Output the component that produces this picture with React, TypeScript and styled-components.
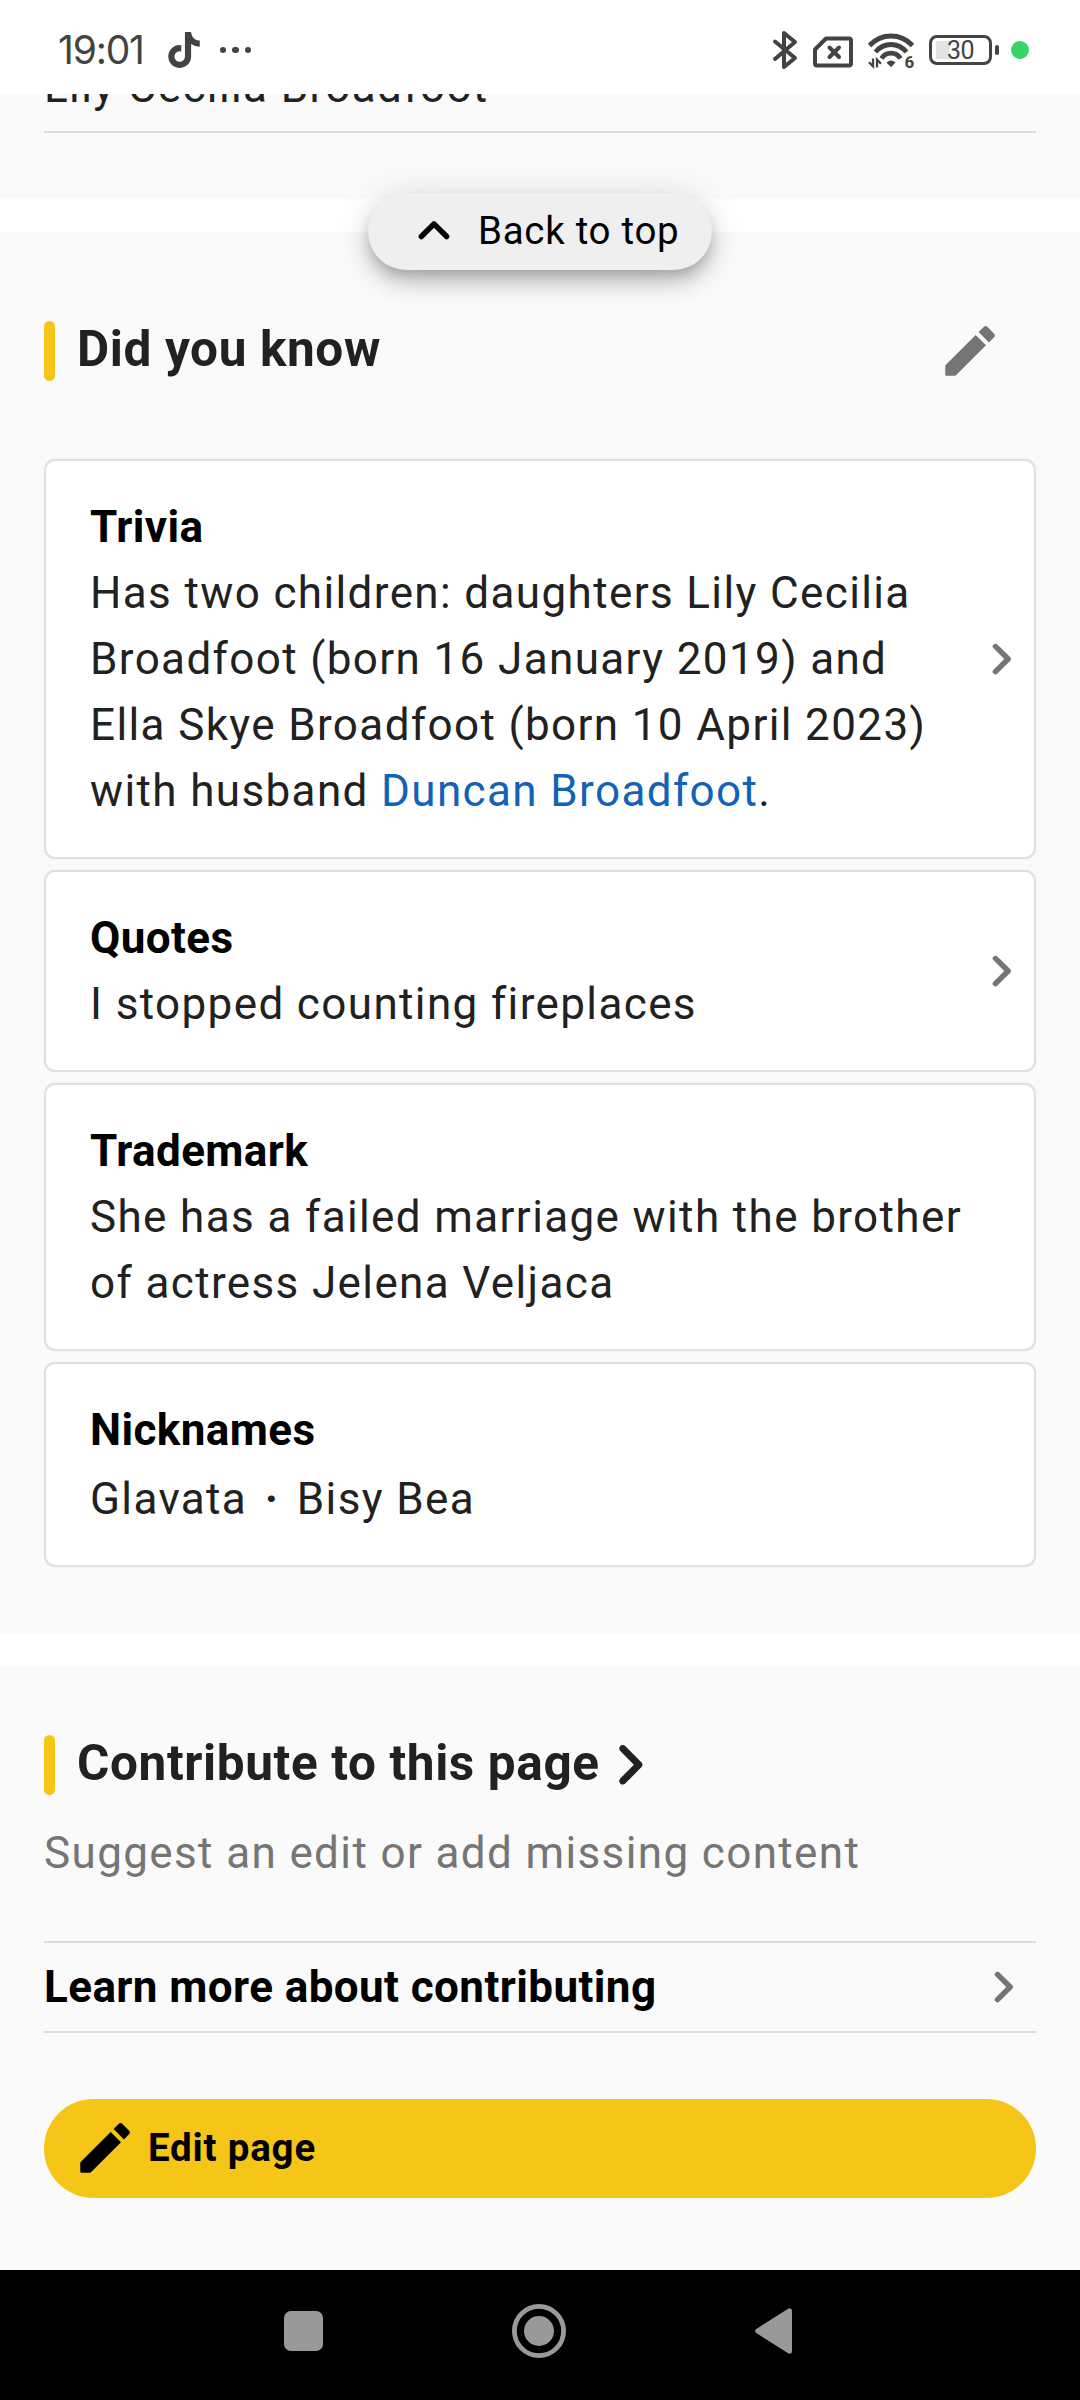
import React from "react";
import styled, { createGlobalStyle } from "styled-components";
import { FaTiktok } from "react-icons/fa";

const GlobalStyle = createGlobalStyle`
  *, *::before, *::after { box-sizing: border-box; }
  body { margin: 0; background: #fff; }
  svg { display: block; flex: none; }
  h2, h3, p { margin: 0; }
  button { border: 0; margin: 0; font: inherit; color: inherit; }
`;

const Screen = styled.div`
  position: relative;
  display: flex;
  flex-direction: column;
  width: 1080px;
  height: 2400px;
  overflow: hidden;
  background: #fff;
  color: #212121;
  font-family: Roboto, "Noto Sans", sans-serif;
  font-size: 44px;
  line-height: 66px;
  letter-spacing: 1.375px;
`;

/* Status bar */

const StatusBar = styled.header`
  flex: none;
  display: flex;
  justify-content: space-between;
  height: 94px;
  padding: 6px 51px 0 58px;
  color: #434343;
`;

const StatusGroup = styled.div<{ $gap: number }>`
  display: flex;
  align-items: center;
  gap: ${(p) => p.$gap}px;
`;

const Clock = styled.span`
  width: 90px;
  font-family: Inter, Roboto, sans-serif;
  font-size: 39px;
  line-height: 48px;
  letter-spacing: -1.2px;
  white-space: nowrap;
`;

const NotificationDots = styled.span`
  display: flex;
  gap: 6px;

  i {
    width: 6.4px;
    height: 6.4px;
    border-radius: 50%;
    background: currentColor;
  }
`;

const Battery = styled.span`
  display: flex;
  align-items: center;
  gap: 3px;
  margin-right: -3px;
`;

const BatteryBody = styled.span`
  display: flex;
  align-items: center;
  justify-content: center;
  width: 63px;
  height: 30px;
  padding-top: 2px;
  border: 3px solid currentColor;
  border-radius: 8px;
  background: linear-gradient(#e3e3e3, #e3e3e3) 4px 3px / 14px 18px no-repeat;
  font-size: 25px;
  line-height: 24px;
  letter-spacing: -0.5px;
`;

const BatteryNub = styled.span`
  width: 4px;
  height: 10px;
  border-radius: 2px;
  background: currentColor;
`;

const ActivityDot = styled.span`
  width: 18px;
  height: 18px;
  border-radius: 50%;
  background: #39d467;
`;

/* Page sections */

const Content = styled.main`
  flex: 1;
  min-height: 0;
  display: flex;
  flex-direction: column;
  gap: 33px;
`;

const Section = styled.section<{ $pad: string; $grow?: boolean }>`
  flex: ${(p) => (p.$grow ? "1" : "none")};
  padding: ${(p) => p.$pad};
  background: #fafafa;
`;

const ClippedRow = styled.div`
  display: flex;
  align-items: flex-end;
  height: 39px;
  overflow: hidden;
  border-bottom: 2px solid #dcdcdc;
`;

const ClippedText = styled.span`
  padding-bottom: 11px;
`;

const SectionHeader = styled.div<{ $height: number; $gapBelow?: number }>`
  display: flex;
  align-items: center;
  height: ${(p) => p.$height}px;
  margin-bottom: ${(p) => p.$gapBelow ?? 0}px;
`;

const AccentBar = styled.span`
  width: 11px;
  height: 60px;
  border-radius: 6px;
  background: #f5c518;
`;

const SectionTitle = styled.h2`
  padding: 0 0 5px 22px;
  font-size: 49.5px;
  line-height: 60px;
  font-weight: 700;
  letter-spacing: 0.62px;
`;

const IconButton = styled.button`
  display: flex;
  margin-left: auto;
  padding: 0 33px 0 0;
  background: none;
  color: #757575;
`;

const CardList = styled.div`
  display: flex;
  flex-direction: column;
  gap: 11px;
`;

const Card = styled.article`
  display: flex;
  align-items: center;
  justify-content: space-between;
  border: 2px solid #e0e0e0;
  border-radius: 11px;
  background: #fff;
  box-shadow: 0 0 2px rgba(0, 0, 0, 0.06);
  color: #757575;
`;

const CardBody = styled.div`
  flex: 1;
  padding: 33px 0 33px 44px;
`;

const CardTitle = styled.h3`
  color: #000;
  font-size: 44px;
  line-height: 66px;
  font-weight: 700;
  letter-spacing: 0.41px;
`;

const CardText = styled.p<{ $inset?: number }>`
  padding-top: ${(p) => p.$inset ?? 0}px;
  color: #212121;
  white-space: nowrap;
`;

const Link = styled.a`
  color: #1262b8;
`;

const Separator = styled.span`
  margin: 0 17.5px;
  font-weight: 700;
`;

const Subtitle = styled.p`
  padding-top: 25px;
  color: #757575;
`;

const LearnMore = styled.div`
  display: flex;
  align-items: center;
  justify-content: space-between;
  height: 92px;
  margin-top: 55px;
  border: solid #dcdcdc;
  border-width: 2px 0;
  color: #757575;
`;

const EditButton = styled.button`
  display: flex;
  align-items: center;
  gap: 10px;
  width: 100%;
  height: 99px;
  margin-top: 66px;
  padding: 0 28px 1px;
  border-radius: 50px;
  background: #f5c518;
  color: #000;
  font-size: 38.5px;
  font-weight: 700;
  letter-spacing: 0.8px;
`;

const BackToTop = styled.button`
  position: absolute;
  top: 193px;
  left: 368px;
  display: flex;
  align-items: center;
  gap: 11px;
  width: 344px;
  height: 77px;
  padding: 0 0 1px 33px;
  border-radius: 39px;
  background: #efefef;
  color: #000;
  font-size: 38.5px;
  letter-spacing: 0.7px;
  white-space: nowrap;
  box-shadow: 0 8px 14px -3px rgba(0, 0, 0, 0.2), 0 14px 22px rgba(0, 0, 0, 0.14),
    0 3px 38px rgba(0, 0, 0, 0.12);
`;

const NavBar = styled.nav`
  flex: none;
  display: flex;
  align-items: center;
  justify-content: center;
  height: 130px;
  padding: 0 4px 8px 0;
  gap: 189px;
  background: #000;
  color: #999;
`;

/* Icons */

const BluetoothIcon = () => (
  <svg width="26" height="40" viewBox="0 0 26 40" fill="none" stroke="currentColor" strokeWidth="4" strokeLinejoin="round" strokeLinecap="round">
    <path d="M3 11.500 23 28 12 37V3L23 12 3 29" />
  </svg>
);

const NoSimIcon = () => (
  <svg width="40" height="35" viewBox="0 -3 40 35" fill="none" stroke="currentColor" strokeWidth="4" strokeLinejoin="round" strokeLinecap="round">
    <path d="M13 2.500H36q2 0 2 2V27.500q0 2-2 2H4q-2 0-2-2V13.500Z" />
    <path d="m16.500 11.500 9.500 9.500m0-9.500-9.500 9.500" />
  </svg>
);

const WifiGeneration = styled.text`
  font: 700 17px Roboto, sans-serif;
  letter-spacing: 0;
`;

const WifiIcon = () => (
  <svg width="46" height="38" viewBox="0 -2 46 38" fill="none" stroke="currentColor">
    <g strokeWidth="4.800">
      <path d="M1.500 12.500Q10.500 3 23 3T44.500 12.500" />
      <path d="M7.500 19Q14 11.500 23 11.500T38.500 19" />
      <path d="M13.500 25.500Q17 20.200 23 20.200T32.500 25.500" />
    </g>
    <path d="M18.500 29.500Q23 25.500 27.500 29.500L24 33.200Q23 34.200 22 33.200Z" fill="currentColor" stroke="none" />
    <path d="M5 25.500V33.300L1 29.200M9 34.500V26.700L13 30.800" strokeWidth="2.300" />
    <WifiGeneration x="36.500" y="35" fill="currentColor" stroke="none">
      6
    </WifiGeneration>
  </svg>
);

const PencilIcon = () => (
  <svg width="66" height="66" viewBox="0 0 24 24" fill="currentColor">
    <path d="M3 17.460v3.040c0 .28.22.5.5.5h3.040c.13 0 .26-.05.35-.15L17.810 9.940l-3.750-3.750L3.150 17.100c-.1.1-.15.22-.15.36zM20.710 7.040a.996.996 0 0 0 0-1.410l-2.340-2.340a.996.996 0 0 0-1.410 0l-1.830 1.830 3.750 3.750 1.830-1.830z" />
  </svg>
);

const ChevronRight = () => (
  <svg width="66" height="66" viewBox="0 0 24 24" fill="currentColor">
    <path d="M9.290 6.710a.996.996 0 0 0 0 1.410L13.170 12l-3.880 3.880a.996.996 0 1 0 1.410 1.410l4.590-4.590a.996.996 0 0 0 0-1.410L10.700 6.700c-.38-.38-1.020-.38-1.410.010z" />
  </svg>
);

const ChevronUp = () => (
  <svg width="66" height="66" viewBox="0 0 24 24" fill="currentColor">
    <path d="M11.290 8.710L6.700 13.300a.996.996 0 1 0 1.410 1.410L12 10.830l3.880 3.880a.996.996 0 1 0 1.410-1.410L12.700 8.710a.996.996 0 0 0-1.410 0z" />
  </svg>
);

const TitleChevron = styled(({ className }: { className?: string }) => (
  <svg className={className} width="39.600" height="39.600" viewBox="0 0 24 24" fill="currentColor">
    <path d="M5.622.631A2.153 2.153 0 0 0 5 2.147c0 .568.224 1.113.622 1.515l8.249 8.340-8.250 8.340a2.160 2.160 0 0 0-.548 2.070c.196.740.768 1.317 1.499 1.515a2.104 2.104 0 0 0 2.048-.555l9.758-9.866a2.153 2.153 0 0 0 0-3.030L8.620.61C7.812-.207 6.450-.207 5.622.63z" />
  </svg>
))`
  margin-left: 11px;
`;

const RecentsIcon = () => (
  <svg width="39" height="40" viewBox="0 0 39 40" fill="currentColor">
    <rect width="39" height="40" rx="7" />
  </svg>
);

const HomeIcon = () => (
  <svg width="54" height="54" viewBox="0 0 54 54">
    <circle cx="27" cy="27" r="24.600" fill="none" stroke="currentColor" strokeWidth="4.800" />
    <circle cx="27" cy="27" r="15" fill="currentColor" />
  </svg>
);

const BackIcon = () => (
  <svg width="37" height="46" viewBox="0 0 37 46" fill="currentColor" stroke="currentColor" strokeWidth="5" strokeLinejoin="round">
    <path d="M34.500 2.800V43.200L2.700 23Z" />
  </svg>
);

export default function App() {
  return (
    <Screen>
      <GlobalStyle />
      <StatusBar>
        <StatusGroup $gap={18}>
          <Clock>19:01</Clock>
          <FaTiktok size={36} />
          <NotificationDots>
            <i />
            <i />
            <i />
          </NotificationDots>
        </StatusGroup>
        <StatusGroup $gap={15}>
          <BluetoothIcon />
          <NoSimIcon />
          <WifiIcon />
          <Battery>
            <BatteryBody>30</BatteryBody>
            <BatteryNub />
          </Battery>
          <ActivityDot />
        </StatusGroup>
      </StatusBar>

      <Content>
        <Section $pad="0 44px 66px">
          <ClippedRow>
            <ClippedText>Lily Cecilia Broadfoot</ClippedText>
          </ClippedRow>
        </Section>

        <Section $pad="86px 44px 66px">
          <SectionHeader $height={66} $gapBelow={75}>
            <AccentBar />
            <SectionTitle>Did you know</SectionTitle>
            <IconButton aria-label="Edit">
              <PencilIcon />
            </IconButton>
          </SectionHeader>
          <CardList>
            <Card>
              <CardBody>
                <CardTitle>Trivia</CardTitle>
                <CardText>
                  Has two children: daughters Lily Cecilia
                  <br />
                  Broadfoot (born 16 January 2019) and
                  <br />
                  Ella Skye Broadfoot (born 10 April 2023)
                  <br />
                  with husband <Link>Duncan Broadfoot</Link>.
                </CardText>
              </CardBody>
              <ChevronRight />
            </Card>
            <Card>
              <CardBody>
                <CardTitle>Quotes</CardTitle>
                <CardText>I stopped counting fireplaces</CardText>
              </CardBody>
              <ChevronRight />
            </Card>
            <Card>
              <CardBody>
                <CardTitle>Trademark</CardTitle>
                <CardText>
                  She has a failed marriage with the brother
                  <br />
                  of actress Jelena Veljaca
                </CardText>
              </CardBody>
            </Card>
            <Card>
              <CardBody>
                <CardTitle>Nicknames</CardTitle>
                <CardText $inset={3}>
                  Glavata<Separator>·</Separator>Bisy Bea
                </CardText>
              </CardBody>
            </Card>
          </CardList>
        </Section>

        <Section $pad="69px 44px 0" $grow>
          <SectionHeader $height={60}>
            <AccentBar />
            <SectionTitle>Contribute to this page</SectionTitle>
            <TitleChevron />
          </SectionHeader>
          <Subtitle>Suggest an edit or add missing content</Subtitle>
          <LearnMore>
            <CardTitle>Learn more about contributing</CardTitle>
            <ChevronRight />
          </LearnMore>
          <EditButton>
            <PencilIcon />
            Edit page
          </EditButton>
        </Section>
      </Content>

      <NavBar>
        <RecentsIcon />
        <HomeIcon />
        <BackIcon />
      </NavBar>

      <BackToTop>
        <ChevronUp />
        Back to top
      </BackToTop>
    </Screen>
  );
}
